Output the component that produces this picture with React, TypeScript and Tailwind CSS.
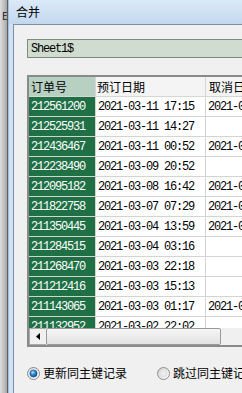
import React from "react";

const rows: [string, string, string][] = [
  ["212561200", "2021-03-11 17:15", "2021-03-12 09:00"],
  ["212525931", "2021-03-11 14:27", ""],
  ["212436467", "2021-03-11 00:52", "2021-03-11 10:00"],
  ["212238490", "2021-03-09 20:52", ""],
  ["212095182", "2021-03-08 16:42", "2021-03-09 09:00"],
  ["211822758", "2021-03-07 07:29", "2021-03-07 12:00"],
  ["211350445", "2021-03-04 13:59", "2021-03-05 08:00"],
  ["211284515", "2021-03-04 03:16", ""],
  ["211268470", "2021-03-03 22:18", ""],
  ["211212416", "2021-03-03 15:13", ""],
  ["211143065", "2021-03-03 01:17", "2021-03-04 09:00"],
  ["211132952", "2021-03-02 22:02", ""],
];

const mono = { fontFamily: '"Liberation Mono", "DejaVu Sans Mono", monospace' };
const cjk = { fontFamily: '"Noto Sans CJK SC", "Noto Sans", sans-serif' };

function RadioOn() {
  return (
    <svg width="13" height="13" viewBox="0 0 13 13" className="shrink-0 block">
      <defs>
        <linearGradient id="ro" x1="0" y1="0" x2="1" y2="1">
          <stop offset="0" stopColor="#d8d8d8" />
          <stop offset="1" stopColor="#ffffff" />
        </linearGradient>
        <radialGradient id="rd" cx="0.4" cy="0.35" r="0.7">
          <stop offset="0" stopColor="#b9e6ff" />
          <stop offset="0.45" stopColor="#2a8ad8" />
          <stop offset="1" stopColor="#0b3f7a" />
        </radialGradient>
      </defs>
      <circle cx="6.5" cy="6.5" r="6" fill="url(#ro)" stroke="#8a8a8a" strokeWidth="1" />
      <circle cx="6.5" cy="6.5" r="3.6" fill="url(#rd)" stroke="#1c4f86" strokeWidth="0.6" />
    </svg>
  );
}

function RadioOff() {
  return (
    <svg width="13" height="13" viewBox="0 0 13 13" className="shrink-0 block">
      <defs>
        <linearGradient id="rf" x1="0" y1="0" x2="1" y2="1">
          <stop offset="0" stopColor="#cfcfcf" />
          <stop offset="1" stopColor="#ffffff" />
        </linearGradient>
        <radialGradient id="rfi" cx="0.5" cy="0.5" r="0.6">
          <stop offset="0" stopColor="#f4f4f4" />
          <stop offset="1" stopColor="#dadada" />
        </radialGradient>
      </defs>
      <circle cx="6.5" cy="6.5" r="6" fill="url(#rf)" stroke="#8e8e8e" strokeWidth="1" />
      <circle cx="6.5" cy="6.5" r="3.8" fill="url(#rfi)" />
    </svg>
  );
}

export default function App() {
  return (
    <div className="w-[242px] h-[393px] overflow-hidden flex bg-[#f0f0f0]">
      {/* window behind */}
      <div className="w-[8px] h-full shrink-0 bg-linear-to-r from-[#dedede] to-[#a8a8a8] border-r border-[#5e5e5e] overflow-hidden">
        <div className="pt-[11px] pl-[2px] text-[10px] leading-none text-[#222]" style={cjk}>E</div>
      </div>
      {/* dialog window */}
      <div className="flex-1 flex flex-col min-w-0">
        <div className="h-[24px] shrink-0 flex items-center pl-[7px] bg-linear-to-b from-[#dbe9f8] to-[#c3d8ef] border-l border-[#a5bedb]">
          <span className="text-[12px] leading-none text-black" style={cjk}>合并</span>
        </div>
        <div className="flex-1 flex min-h-0">
          <div className="w-[5px] shrink-0 bg-[#cfe1f4] border-l border-[#a5bedb]" />
          <div className="flex-1 min-w-0 overflow-hidden bg-[#f0f0f0] border-l border-t border-[#7e8fa2] pl-[13px] pt-[14px]">
            {/* textbox */}
            <div className="w-[240px] h-[19px] border border-[#7f8a80] bg-[#cfdccf] flex items-center pl-[3px]">
              <span className="text-[12px] tracking-[-1.2px] text-black leading-none" style={mono}>Sheet1$</span>
            </div>
            {/* grid */}
            <div className="mt-[17px] w-[260px] h-[272px] border-2 border-[#8a8a8a] bg-white flex flex-col">
              <div className="h-[20px] shrink-0 flex border-b border-[#d6d6d6]">
                <div className="w-[67px] shrink-0 bg-[#b8d0c1] border-r border-[#d6d6d6] flex items-center pl-[2px]">
                  <span className="text-[12px] leading-none text-black" style={cjk}>订单号</span>
                </div>
                <div className="w-[110px] shrink-0 bg-[#f4f4f4] border-r border-[#d6d6d6] flex items-center pl-[1px]">
                  <span className="text-[12px] leading-none text-black" style={cjk}>预订日期</span>
                </div>
                <div className="flex-1 bg-[#f4f4f4] flex items-center pl-[3px] overflow-hidden">
                  <span className="text-[12px] leading-none text-black whitespace-nowrap" style={cjk}>取消日期</span>
                </div>
              </div>
              <div className="h-[231px] shrink-0 overflow-hidden">
                {rows.map((r) => (
                  <div key={r[0]} className="h-[20px] flex">
                    <div className="w-[67px] shrink-0 bg-[#1f7045] border-r border-b border-[#d4d4d4] flex items-center pl-[2px]">
                      <span className="text-[12px] tracking-[-1.2px] text-white leading-none whitespace-nowrap" style={mono}>{r[0]}</span>
                    </div>
                    <div className="w-[110px] shrink-0 border-r border-b border-[#d4d4d4] flex items-center pl-[2px]">
                      <span className="text-[12px] tracking-[-1.2px] text-black leading-none whitespace-nowrap" style={mono}>{r[1]}</span>
                    </div>
                    <div className="flex-1 border-b border-[#d4d4d4] flex items-center pl-[2px] overflow-hidden">
                      <span className="text-[12px] tracking-[-1.2px] text-black leading-none whitespace-nowrap" style={mono}>{r[2]}</span>
                    </div>
                  </div>
                ))}
              </div>
              {/* horizontal scrollbar */}
              <div className="h-[17px] shrink-0 flex bg-[#ececec]">
                <div className="w-[17px] shrink-0 border border-r-0 border-[#a8a8a8] bg-[#f0f0f0] flex items-center justify-center">
                  <svg width="5" height="7" viewBox="0 0 5 7">
                    <path d="M4 0 L0 3.5 L4 7 Z" fill="#000" />
                  </svg>
                </div>
                <div className="w-[175px] shrink-0 border border-[#9a9a9a] rounded-[2px] bg-linear-to-b from-[#f6f6f6] to-[#e2e2e2]" />
                <div className="flex-1 bg-[#f0f0f0]" />
              </div>
            </div>
            {/* radios */}
            <div className="mt-[16px] h-[20px] flex items-center whitespace-nowrap">
              <RadioOn />
              <span className="ml-[3px] shrink-0 text-[12px] leading-none text-black" style={cjk}>更新同主键记录</span>
              <span className="ml-[30px] shrink-0 flex items-center">
                <RadioOff />
              </span>
              <span className="ml-[3px] shrink-0 text-[12px] leading-none text-black" style={cjk}>跳过同主键记录</span>
            </div>
          </div>
        </div>
      </div>
    </div>
  );
}
